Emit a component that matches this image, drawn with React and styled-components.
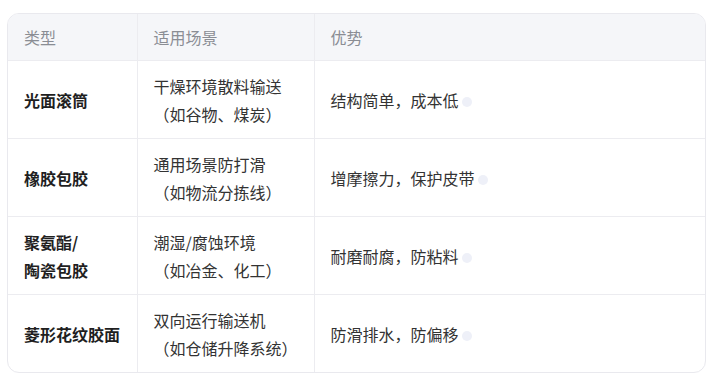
import React from "react";
import styled, { createGlobalStyle } from "styled-components";

const GlobalStyle = createGlobalStyle`
  html, body {
    margin: 0;
    padding: 0;
    background: #ffffff;
  }
  body {
    font-family: "Noto Sans CJK SC", "Noto Sans", sans-serif;
  }
`;

const rows = [
  {
    type: ["光面滚筒"],
    scene: ["干燥环境散料输送", "（如谷物、煤炭）"],
    gain: "结构简单，成本低",
  },
  {
    type: ["橡胶包胶"],
    scene: ["通用场景防打滑", "（如物流分拣线）"],
    gain: "增摩擦力，保护皮带",
  },
  {
    type: ["聚氨酯/", "陶瓷包胶"],
    scene: ["潮湿/腐蚀环境", "（如冶金、化工）"],
    gain: "耐磨耐腐，防粘料",
  },
  {
    type: ["菱形花纹胶面"],
    scene: ["双向运行输送机", "（如仓储升降系统）"],
    gain: "防滑排水，防偏移",
  },
];

function Lines({ items }) {
  return items.map((t, i) => (
    <React.Fragment key={i}>
      {i > 0 && <br />}
      {t}
    </React.Fragment>
  ));
}

export default function App() {
  return (
    <>
      <GlobalStyle />
      <Page>
        <Frame>
          <Table>
            <colgroup>
              <col style={{ width: 129 }} />
              <col style={{ width: 177 }} />
              <col />
            </colgroup>
            <thead>
              <tr>
                <Th>类型</Th>
                <Th>适用场景</Th>
                <Th>优势</Th>
              </tr>
            </thead>
            <tbody>
              {rows.map((r, i) => (
                <tr key={i}>
                  <Td $bold>
                    <Lines items={r.type} />
                  </Td>
                  <Td>
                    <Lines items={r.scene} />
                  </Td>
                  <Td>
                    {r.gain}
                    <Cursor />
                  </Td>
                </tr>
              ))}
            </tbody>
          </Table>
        </Frame>
      </Page>
    </>
  );
}

const Page = styled.div`
  padding: 13px 13px 8px 7px;
`;

const Frame = styled.div`
  width: 699px;
  border: 1px solid #e9e9ee;
  border-radius: 12px;
  overflow: hidden;
  box-sizing: border-box;
`;

const Table = styled.table`
  width: 100%;
  border-collapse: collapse;
  table-layout: fixed;
  font-size: 16px;
  color: #262626;

  tr + tr td {
    border-top: 1px solid #ececf0;
  }
`;

const Th = styled.th`
  background: #f5f6f9;
  color: #8a8d94;
  font-weight: 400;
  text-align: left;
  line-height: 26px;
  padding: 10px 16px 10px 16px;
  border-bottom: 1px solid #ececf0;
  & + & {
    border-left: 1px solid #ececf0;
  }
`;

const Td = styled.td`
  padding: 11px 16px 10px;
  line-height: 28px;
  white-space: nowrap;
  font-weight: ${(p) => (p.$bold ? 700 : 400)};
  color: ${(p) => (p.$bold ? "#1f1f1f" : "#333333")};
  & + & {
    border-left: 1px solid #ececf0;
  }
`;

const Cursor = styled.span`
  display: inline-block;
  width: 10px;
  height: 10px;
  margin-left: 3px;
  border-radius: 50%;
  background: #eef0f8;
  vertical-align: 0px;
`;
